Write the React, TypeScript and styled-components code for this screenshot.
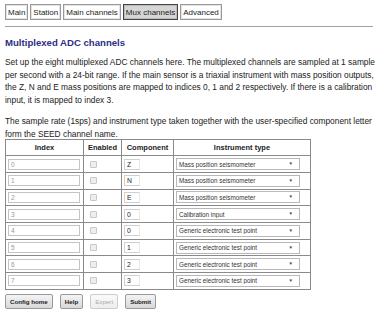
import React from "react";
import styled, { createGlobalStyle } from "styled-components";

const GlobalStyle = createGlobalStyle`
  body {
    margin: 0;
    background: #ffffff;
    font-family: "Liberation Sans", Arial, sans-serif;
    color: #222;
  }
`;

const Page = styled.div`
  padding: 4px 0 0 5px;
  width: 370px;
`;

const TabBar = styled.nav`
  display: flex;
  gap: 2px;
`;

const Tab = styled.span<{ $active?: boolean }>`
  display: flex;
  align-items: center;
  height: 14px;
  padding: 0 2px;
  font-size: 8px;
  color: #222;
  border: 1px solid ${(p) => (p.$active ? "#444" : "#999")};
  background: ${(p) => (p.$active ? "#d6d6d6" : "#fff")};
  box-shadow: inset 0 0 0 1px ${(p) => (p.$active ? "#bbb" : "#e4e4e4")};
`;

const Rule = styled.hr`
  margin: 6px 0 0 0;
  width: 368px;
  border: none;
  border-top: 1px solid #a0a0a0;
`;

const Title = styled.h1`
  margin: 10px 0 0 0;
  font-size: 9.6px;
  font-weight: bold;
  color: #2e2e86;
  line-height: 12px;
`;

const Para = styled.p<{ $top: number }>`
  margin: ${(p) => p.$top}px 0 0 0;
  font-size: 8.35px;
  line-height: 12.7px;
  color: #222;
`;

const Table = styled.table`
  margin-top: -1px;
  border-collapse: collapse;
  font-size: 7.5px;
`;

const Th = styled.th<{ $w: number }>`
  width: ${(p) => p.$w}px;
  height: 15px;
  padding: 0;
  border: 1px solid #8a8a8a;
  font-weight: bold;
  text-align: center;
  color: #222;
`;

const Td = styled.td`
  height: 15.7px;
  padding: 0 2px;
  border: 1px solid #8a8a8a;
  vertical-align: middle;
`;

const IndexInput = styled.input`
  display: block;
  box-sizing: border-box;
  width: 72px;
  height: 11px;
  margin: 0;
  padding: 0 2px;
  border: 1px solid #c4c4c4;
  background: #fff;
  font-family: inherit;
  font-size: 6.5px;
  color: #999;
`;

const Check = styled.input`
  appearance: none;
  display: block;
  width: 7px;
  height: 7px;
  margin: 0 0 0 4px;
  border: 1px solid #c8c8c8;
  background: #eee;
  border-radius: 1px;
`;

const CompInput = styled.input`
  display: block;
  box-sizing: border-box;
  width: 16px;
  height: 11px;
  margin: 0;
  padding: 0 2px;
  border: 1px solid #d0d0d0;
  border-right-color: #e8e8e8;
  background: #fff;
  font-family: inherit;
  font-size: 6.8px;
  color: #222;
`;

const SelectWrap = styled.div`
  position: relative;
  width: 124px;
`;

const Select = styled.select`
  appearance: none;
  display: block;
  box-sizing: border-box;
  width: 100%;
  height: 12px;
  margin: 0;
  padding: 0 2px;
  border: 1px solid #b8b8b8;
  border-radius: 0;
  background: #fff;
  font-family: inherit;
  font-size: 6.3px;
  color: #333;
`;

const Arrow = styled.span`
  position: absolute;
  right: 7px;
  top: 1px;
  font-size: 4.5px;
  line-height: 10px;
  color: #444;
  pointer-events: none;
`;

const ButtonRow = styled.div`
  display: flex;
  gap: 7px;
  margin-top: 4px;
`;

const Button = styled.button`
  height: 15px;
  padding: 0 4px;
  font-family: inherit;
  font-size: 6.2px;
  font-weight: bold;
  color: #222;
  border: 1px solid #999;
  border-radius: 2px;
  background: linear-gradient(#f4f4f4, #d8d8d8);
  &:disabled {
    font-weight: normal;
    color: #aaa;
    border-color: #ccc;
    background: linear-gradient(#fafafa, #eeeeee);
  }
`;

const rows = [
  { comp: "Z", type: "Mass position seismometer" },
  { comp: "N", type: "Mass position seismometer" },
  { comp: "E", type: "Mass position seismometer" },
  { comp: "0", type: "Calibration input" },
  { comp: "0", type: "Generic electronic test point" },
  { comp: "1", type: "Generic electronic test point" },
  { comp: "2", type: "Generic electronic test point" },
  { comp: "3", type: "Generic electronic test point" },
];

const tabs = ["Main", "Station", "Main channels", "Mux channels", "Advanced"];

export default function App() {
  return (
    <Page>
      <GlobalStyle />
      <TabBar>
        {tabs.map((t) => (
          <Tab key={t} $active={t === "Mux channels"}>
            {t}
          </Tab>
        ))}
      </TabBar>
      <Rule />
      <Title>Multiplexed ADC channels</Title>
      <Para $top={7}>
        Set up the eight multiplexed ADC channels here. The multiplexed
        channels are sampled at 1 sample per second with a 24-bit range. If
        the main sensor is a triaxial instrument with mass position outputs,
        the Z, N and E mass positions are mapped to indices 0, 1 and 2
        respectively. If there is a calibration input, it is mapped to index
        3.
      </Para>
      <Para $top={8}>
        The sample rate (1sps) and instrument type taken together with the
        user-specified component letter
        <br />
        form the SEED channel name.
      </Para>
      <Table>
        <thead>
          <tr>
            <Th $w={77}>Index</Th>
            <Th $w={37}>Enabled</Th>
            <Th $w={51}>Component</Th>
            <Th $w={136}>Instrument type</Th>
          </tr>
        </thead>
        <tbody>
          {rows.map((r, i) => (
            <tr key={i}>
              <Td>
                <IndexInput disabled defaultValue={String(i)} />
              </Td>
              <Td>
                <Check type="checkbox" disabled />
              </Td>
              <Td>
                <CompInput defaultValue={r.comp} />
              </Td>
              <Td>
                <SelectWrap>
                  <Select defaultValue={r.type}>
                    <option>Mass position seismometer</option>
                    <option>Calibration input</option>
                    <option>Generic electronic test point</option>
                  </Select>
                  <Arrow>▼</Arrow>
                </SelectWrap>
              </Td>
            </tr>
          ))}
        </tbody>
      </Table>
      <ButtonRow>
        <Button>Config home</Button>
        <Button>Help</Button>
        <Button disabled>Expert</Button>
        <Button>Submit</Button>
      </ButtonRow>
    </Page>
  );
}
